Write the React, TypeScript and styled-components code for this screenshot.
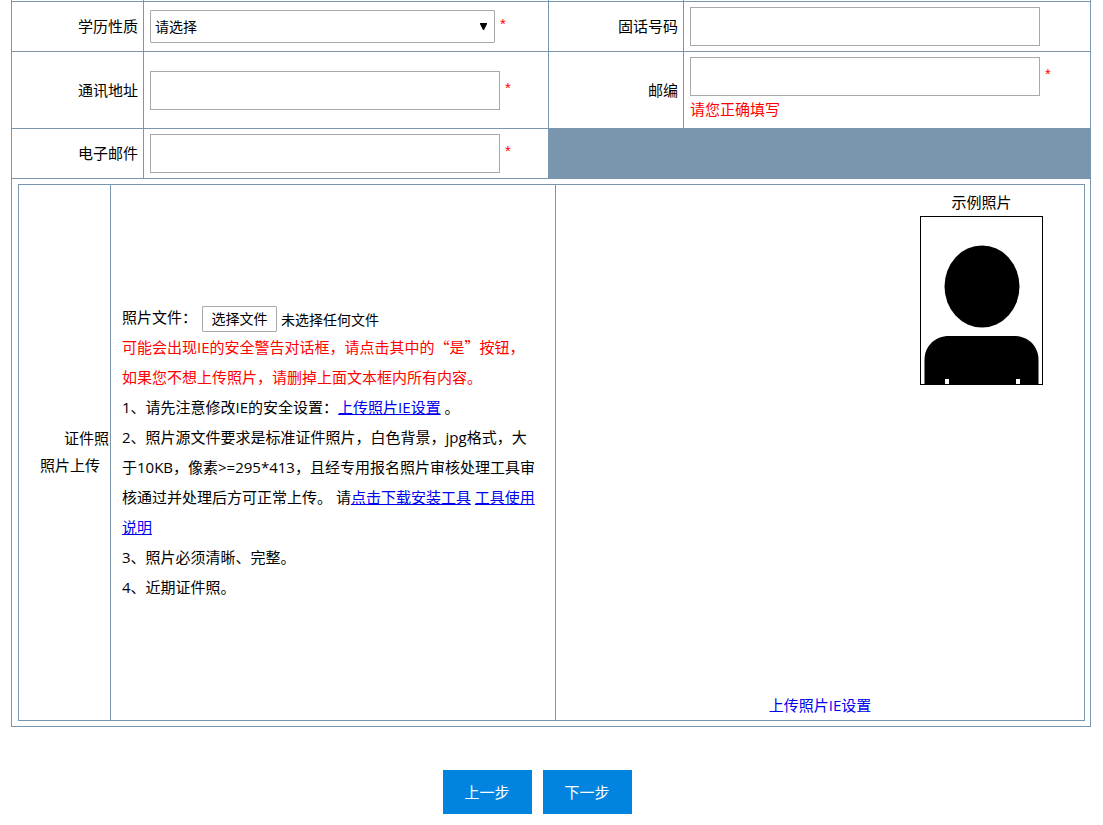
import React from 'react';
import styled, { createGlobalStyle } from 'styled-components';

const line = '#7a95ae';
const fieldBorder = '#a9a9a9';

const GlobalStyle = createGlobalStyle`
  * { box-sizing: border-box; }
  body {
    margin: 0;
    background: #fff;
    color: #000;
    font-family: "Open Sans", "Noto Sans CJK SC", sans-serif;
    font-size: 15px;
    line-height: 27px;
  }
`;

const Page = styled.form`
  padding: 0 12px 11px 11px;
`;

const FormGrid = styled.div`
  display: grid;
  grid-template-columns: 131fr 404fr 134fr 406fr;
  gap: 1px;
  padding: 0 1px 1px;
  background: ${line};
`;

const RowEdge = styled.div`
  height: 1px;
  background: #fff;
`;

const LabelCell = styled.label`
  display: flex;
  align-items: center;
  justify-content: flex-end;
  padding: 5px;
  background: #fff;
`;

const FieldCell = styled.div`
  display: flex;
  flex-direction: column;
  justify-content: center;
  padding: 5px 6px;
  background: #fff;
  min-width: 0;
`;

const FieldLine = styled.div`
  display: flex;
  align-items: center;
  gap: 5px;
`;

const TextInput = styled.input`
  width: 350px;
  min-width: 0;
  height: 39px;
  padding: 0 5px;
  border: 1px solid ${fieldBorder};
  background: #fff;
  font: inherit;
`;

const SelectBox = styled.div`
  position: relative;
  width: 345px;
  height: 33px;

  svg {
    position: absolute;
    right: 8px;
    top: 13px;
    pointer-events: none;
  }
`;

const Select = styled.select`
  appearance: none;
  width: 100%;
  height: 100%;
  padding: 0 20px 0 4px;
  border: 1px solid ${fieldBorder};
  border-radius: 1px;
  background: #fff;
  color: #000;
  font-family: inherit;
  font-size: 14px;
`;

const Required = styled.span`
  padding-bottom: 6px;
  color: #f00;
  font-family: "Liberation Sans", sans-serif;
`;

const ErrorText = styled.div`
  color: #f00;
`;

const UploadCell = styled.div`
  grid-column: 1 / -1;
  padding: 5px 5px 5px 6px;
  background: #fff;
`;

const UploadGrid = styled.div`
  display: grid;
  grid-template-columns: 91fr 444fr 528fr;
  gap: 1px;
  min-height: 537px;
  padding: 1px;
  background: ${line};
`;

const UploadTitle = styled.div`
  display: flex;
  flex-direction: column;
  justify-content: center;
  align-items: flex-end;
  padding: 0 1px 2px 0;
  background: #fff;
`;

const TitleSecond = styled.span`
  padding-right: 9px;
`;

const Instructions = styled.div`
  display: flex;
  flex-direction: column;
  justify-content: center;
  padding: 0 14px 2px 11px;
  background: #fff;
  line-height: 30px;

  p { margin: 0; }
`;

const Warning = styled.p`
  color: #f00;
`;

const Quoted = styled.span`
  font-family: "Noto Sans CJK SC", sans-serif;
`;

const FileRow = styled.label`
  position: relative;
  display: flex;
  align-items: flex-end;
  gap: 4px;
  height: 30px;
`;

const HiddenFile = styled.input`
  position: absolute;
  inset: 0;
  opacity: 0;
`;

const FileCaption = styled.span`
  width: 76px;
`;

const FileButton = styled.span`
  width: 75px;
  border: 1px solid ${fieldBorder};
  border-radius: 1px;
  font-size: 14px;
  line-height: 24px;
  text-align: center;
  white-space: nowrap;
`;

const FileStatus = styled.span`
  font-size: 14px;
  line-height: 24px;
`;

const Link = styled.a<{ $plain?: boolean }>`
  color: #00e;
  text-decoration: ${p => (p.$plain ? 'none' : 'underline')};
`;

const PhotoCell = styled.div`
  display: flex;
  flex-direction: column;
  justify-content: space-between;
  align-items: center;
  padding: 4px 0 1px;
  background: #fff;
`;

const Sample = styled.figure`
  display: flex;
  flex-direction: column;
  align-items: center;
  align-self: flex-end;
  margin: 0 41px 0 0;

  svg {
    display: block;
    border: 1px solid #000;
  }
`;

const Actions = styled.div`
  display: flex;
  justify-content: center;
  gap: 11px;
  padding: 43px 28px 0 0;
`;

const ActionButton = styled.button`
  width: 89px;
  height: 44px;
  padding: 0;
  border: 0;
  background: #0084e0;
  color: #fff;
  font: inherit;
`;

export default function App() {
  return (
    <>
      <GlobalStyle />
      <Page lang="zh-CN" onSubmit={e => e.preventDefault()}>
        <FormGrid>
          <RowEdge />
          <RowEdge />
          <RowEdge />
          <RowEdge />

          <LabelCell htmlFor="education">学历性质</LabelCell>
          <FieldCell>
            <FieldLine>
              <SelectBox>
                <Select id="education">
                  <option>请选择</option>
                </Select>
                <svg width="7" height="7" viewBox="0 0 7 7" aria-hidden="true">
                  <path d="M0 0H7V1L4 7H3L0 1Z" fill="#000" />
                </svg>
              </SelectBox>
              <Required>*</Required>
            </FieldLine>
          </FieldCell>
          <LabelCell htmlFor="phone">固话号码</LabelCell>
          <FieldCell>
            <TextInput id="phone" type="text" />
          </FieldCell>

          <LabelCell htmlFor="address">通讯地址</LabelCell>
          <FieldCell>
            <FieldLine>
              <TextInput id="address" type="text" />
              <Required>*</Required>
            </FieldLine>
          </FieldCell>
          <LabelCell htmlFor="postcode">邮编</LabelCell>
          <FieldCell>
            <FieldLine>
              <TextInput id="postcode" type="text" />
              <Required>*</Required>
            </FieldLine>
            <ErrorText>请您正确填写</ErrorText>
          </FieldCell>

          <LabelCell htmlFor="email">电子邮件</LabelCell>
          <FieldCell>
            <FieldLine>
              <TextInput id="email" type="text" />
              <Required>*</Required>
            </FieldLine>
          </FieldCell>

          <UploadCell>
            <UploadGrid>
              <UploadTitle>
                <span>证件照</span>
                <TitleSecond>照片上传</TitleSecond>
              </UploadTitle>
              <Instructions>
                <FileRow>
                  <FileCaption>{'照片文件\uFF1A'}</FileCaption>
                  <FileButton>选择文件</FileButton>
                  <FileStatus>未选择任何文件</FileStatus>
                  <HiddenFile type="file" />
                </FileRow>
                <Warning>
                  {'可能会出现IE的安全警告对话框\uFF0C请点击其中的'}
                  <Quoted>{'\u201C是\u201D'}</Quoted>
                  {'按钮\uFF0C'}
                  <br />
                  {'如果您不想上传照片\uFF0C请删掉上面文本框内所有内容。'}
                </Warning>
                <p>
                  {'1、请先注意修改IE的安全设置\uFF1A'}
                  <Link href="#ie">上传照片IE设置</Link> 。
                </p>
                <p>
                  {'2、照片源文件要求是标准证件照片\uFF0C白色背景\uFF0Cjpg格式\uFF0C大于10KB\uFF0C像素>=295*413\uFF0C且经专用报名照片审核处理工具审核通过并处理后方可正常上传。 请'}
                  <Link href="#download">点击下载安装工具</Link>{' '}
                  <Link href="#manual">工具使用说明</Link>
                </p>
                <p>3、照片必须清晰、完整。</p>
                <p>4、近期证件照。</p>
              </Instructions>
              <PhotoCell>
                <Sample>
                  <figcaption>示例照片</figcaption>
                  <svg width="123" height="169" viewBox="0 0 121 167" role="img" aria-label="示例照片">
                    <ellipse cx="61" cy="69.5" rx="37.5" ry="41" />
                    <path d="M3.5 167V143C3.5 129 14 119 28 119H93C107 119 117.5 129 117.5 143V167Z" />
                    <path d="M24 162H28V167H24ZM95 162H99V167H95Z" fill="#fff" />
                  </svg>
                </Sample>
                <Link $plain href="#ie">上传照片IE设置</Link>
              </PhotoCell>
            </UploadGrid>
          </UploadCell>
        </FormGrid>
        <Actions>
          <ActionButton type="button">上一步</ActionButton>
          <ActionButton type="submit">下一步</ActionButton>
        </Actions>
      </Page>
    </>
  );
}
